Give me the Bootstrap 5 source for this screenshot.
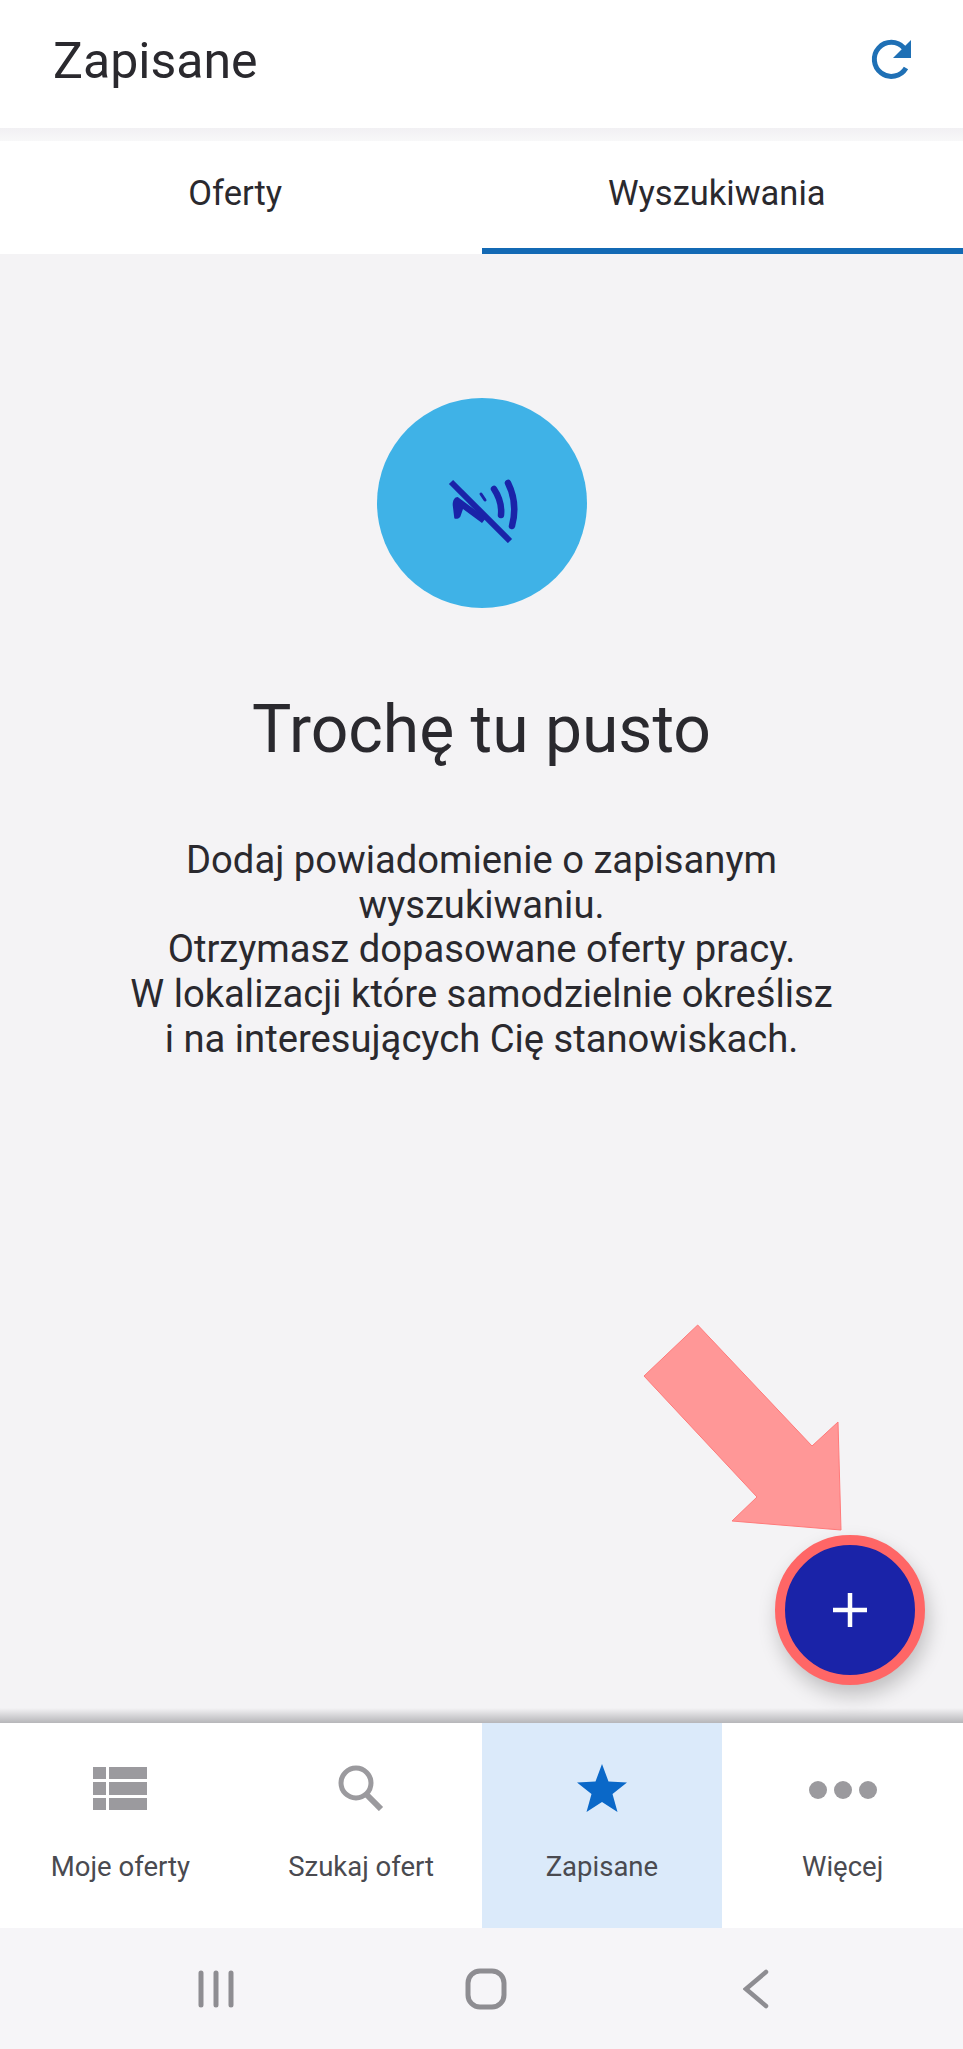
<!DOCTYPE html>
<html lang="pl">
<head>
  <meta charset="UTF-8">
  <title>Zapisane</title>
  <link href="https://cdn.jsdelivr.net/npm/bootstrap@5.3.0/dist/css/bootstrap.min.css" rel="stylesheet">
  <style>
    body { font-family: Roboto, "Liberation Sans", sans-serif; background: #f4f3f5; color: #26252a; }
    .app-page { width: 963px; height: 2049px; overflow: hidden; position: relative; }
    .top-bar { height: 128px; padding: 0 49px 0 53px; }
    .top-title { font-size: 50px; font-weight: 400; margin: 0 0 6px; line-height: 1; color: #2a292e; }
    .top-refresh { margin-bottom: 11px; }
    .top-strip { height: 13px; background: linear-gradient(#f1f0f3, #f8f8f9); }
    .tab-bar { height: 113px; }
    .tab-bar .nav-link { height: 113px; padding: 0 11px 0 0; line-height: 105px; font-size: 34.500px; color: #2a292e; border-radius: 0; }
    .tab-bar .nav-link.active { color: #2a292e; box-shadow: inset 0 -6px 0 #1369b4; }
    .empty-box { padding-top: 144px; }
    .empty-circle { width: 210px; height: 210px; background: #3fb2e7; }
    .empty-title { font-size: 66px; font-weight: 400; line-height: 76px; margin: 84px 0 0; color: #2a292e; }
    .empty-text { font-size: 38.200px; line-height: 44.700px; margin: 70px 0 0; color: #2a292e; }
    .add-btn { position: absolute; left: 775px; top: 1535px; width: 150px; height: 150px; background: #1a23a8; border: 10px solid #ff6666; box-shadow: 3px 10px 20px rgba(0,0,0,.22); }
    .hint-arrow { position: absolute; left: 0; top: 0; pointer-events: none; }
    .nav-shadow { height: 15px; background: linear-gradient(#f4f3f5, #b6b6b9); }
    .bottom-nav { height: 205px; }
    .bottom-item { height: 205px; padding-top: 40px; }
    .bottom-item.on { background: #dbeafa; }
    .bottom-icon { height: 50px; }
    .bottom-dots { padding-top: 3px; }
    .bottom-label { font-size: 27.500px; line-height: 32px; margin-top: 38px; color: #4a4a50; }
    .sys-bar { height: 121px; background: #f6f5f8; padding-left: 9px; }
    .sys-slot { width: 270px; }
  </style>
</head>
<body>

  <div class="app-page d-flex flex-column">

    <div class="top-bar bg-white d-flex justify-content-between align-items-center">
      <h1 class="top-title">Zapisane</h1>
      <svg class="top-refresh" width="44" height="44" viewBox="0 0 44 44">
        <path d="M36 31a17 17 0 1 1-2-20" fill="none" stroke="#1f70b5" stroke-width="5"/>
        <path d="M41 3v18H23z" fill="#1f70b5"/>
      </svg>
    </div>
    <div class="top-strip"></div>

    <ul class="nav nav-justified tab-bar bg-white">
      <li class="nav-item"><a class="nav-link" href="#">Oferty</a></li>
      <li class="nav-item"><a class="nav-link active" href="#">Wyszukiwania</a></li>
    </ul>

    <div class="empty-box flex-grow-1 text-center">
      <div class="empty-circle rounded-circle mx-auto d-flex align-items-center justify-content-center">
        <svg width="80" height="80" viewBox="0 0 80 80" fill="none" stroke="#1a23a8" stroke-linecap="round">
          <path d="M9 19l59 59" stroke-width="6" stroke-linecap="butt"/>
          <path d="M66 20c7 14 8 28 4 43" stroke-width="6.500"/>
          <path d="M52 26c6 9 8 16 7 26" stroke-width="6.500"/>
          <path d="M39 31l4 6" stroke-width="3"/>
          <path d="M10.700 42c0-5 2-8 5-8L44 55l-4 5-19-14-2.700 7.700c-2 2.500-5 2.500-6 1.500z" fill="#1a23a8" stroke="none"/>
        </svg>
      </div>
      <h2 class="empty-title">Trochę tu pusto</h2>
      <p class="empty-text">Dodaj powiadomienie o zapisanym<br>wyszukiwaniu.<br>Otrzymasz dopasowane oferty pracy.<br>W lokalizacji które samodzielnie określisz<br>i na interesujących Cię stanowiskach.</p>
    </div>

    <div class="nav-shadow"></div>

    <div class="row g-0 bottom-nav bg-white text-center">
      <div class="col-3 bottom-item">
        <div class="bottom-icon d-flex align-items-center justify-content-center">
          <svg width="54" height="43" viewBox="0 0 54 43" fill="#9b9a9e">
            <path d="M0 0h13v12H0zM16 0h38v12H16zM0 15h13v13H0zM16 15h38v13H16zM0 31h13v12H0zM16 31h38v12H16z"/>
          </svg>
        </div>
        <div class="bottom-label">Moje oferty</div>
      </div>
      <div class="col-3 bottom-item">
        <div class="bottom-icon d-flex align-items-center justify-content-center">
          <svg width="46" height="46" viewBox="0 0 46 46" fill="none" stroke="#9b9a9e">
            <circle cx="18" cy="18" r="15" stroke-width="5"/>
            <path d="M28 29l15 15" stroke-width="6"/>
          </svg>
        </div>
        <div class="bottom-label">Szukaj ofert</div>
      </div>
      <div class="col-3 bottom-item on">
        <div class="bottom-icon d-flex align-items-center justify-content-center">
          <svg width="50" height="48" viewBox="0 0 50 48">
            <path d="M25 0l6.500 17.500L50 18.500 35.500 30l5 18L25 38l-15.500 10 5-18L0 18.500l18.500-1z" fill="#0a68c8"/>
          </svg>
        </div>
        <div class="bottom-label">Zapisane</div>
      </div>
      <div class="col-3 bottom-item">
        <div class="bottom-icon bottom-dots d-flex align-items-center justify-content-center">
          <svg width="68" height="18" viewBox="0 0 68 18" fill="#9b9a9e">
            <circle cx="9" cy="9" r="9"/><circle cx="34" cy="9" r="9"/><circle cx="59" cy="9" r="9"/>
          </svg>
        </div>
        <div class="bottom-label">Więcej</div>
      </div>
    </div>

    <div class="sys-bar d-flex justify-content-center align-items-center text-center">
      <div class="sys-slot">
        <svg width="40" height="38" viewBox="0 0 40 38" fill="none" stroke="#8e8d92" stroke-width="5" stroke-linecap="round">
          <path d="M5 3v32M20 3v32M35 3v32"/>
        </svg>
      </div>
      <div class="sys-slot">
        <svg width="42" height="42" viewBox="0 0 42 42" fill="none" stroke="#8e8d92" stroke-width="5">
          <rect x="3" y="3" width="36" height="36" rx="12"/>
        </svg>
      </div>
      <div class="sys-slot">
        <svg width="26" height="40" viewBox="0 0 26 40" fill="none" stroke="#8e8d92" stroke-width="4.500" stroke-linecap="round">
          <path d="M23 3L3 20l20 17"/>
        </svg>
      </div>
    </div>

    <svg class="hint-arrow" width="963" height="2049" viewBox="0 0 963 2049">
      <path d="M697.700 1325L644 1376l113 121-25 24 109 9-3-108-26 24z" fill="#ff9797" stroke="#ff7a7a" stroke-width="1"/>
    </svg>

    <button class="add-btn rounded-circle d-flex align-items-center justify-content-center p-0" type="button" aria-label="Dodaj">
      <svg width="36" height="36" viewBox="0 0 36 36" fill="none" stroke="#fff" stroke-width="4.500">
        <path d="M18 1v34M1 18h34"/>
      </svg>
    </button>
  </div>

</body>
</html>
